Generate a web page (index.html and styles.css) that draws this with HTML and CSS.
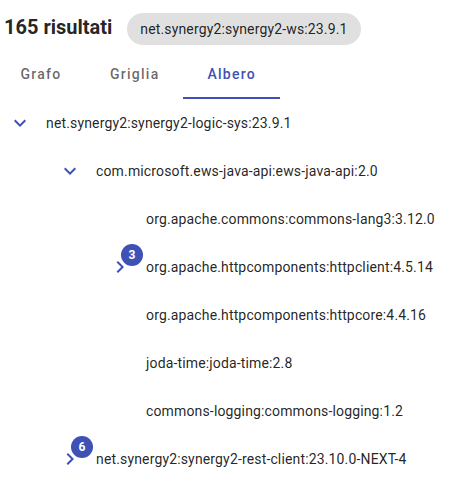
FILE: index.html
```html
<!DOCTYPE html>
<html lang="it">
<head>
<meta charset="utf-8">
<title>Albero</title>
<link rel="stylesheet" href="styles.css">
</head>
<body>
<div class="header">
  <h2 class="title">165 risultati</h2>
  <span class="chip">net.synergy2:synergy2-ws:23.9.1</span>
</div>
<nav class="tabs">
  <div class="tab">Grafo</div>
  <div class="tab">Griglia</div>
  <div class="tab active">Albero</div>
</nav>
<div class="tree">
  <div class="node lvl0">
    <span class="toggle"><svg viewBox="0 0 24 24"><path d="M16.59 8.59L12 13.17 7.41 8.59 6 10l6 6 6-6z"/></svg></span>
    <span class="label">net.synergy2:synergy2-logic-sys:23.9.1</span>
  </div>
  <div class="node lvl1">
    <span class="toggle"><svg viewBox="0 0 24 24"><path d="M16.59 8.59L12 13.17 7.41 8.59 6 10l6 6 6-6z"/></svg></span>
    <span class="label">com.microsoft.ews-java-api:ews-java-api:2.0</span>
  </div>
  <div class="node lvl2">
    <span class="toggle"></span>
    <span class="label">org.apache.commons:commons-lang3:3.12.0</span>
  </div>
  <div class="node lvl2">
    <span class="toggle"><svg viewBox="0 0 24 24"><path d="M10 6L8.59 7.41 13.17 12l-4.58 4.59L10 18l6-6z"/></svg><span class="badge">3</span></span>
    <span class="label">org.apache.httpcomponents:httpclient:4.5.14</span>
  </div>
  <div class="node lvl2">
    <span class="toggle"></span>
    <span class="label">org.apache.httpcomponents:httpcore:4.4.16</span>
  </div>
  <div class="node lvl2">
    <span class="toggle"></span>
    <span class="label">joda-time:joda-time:2.8</span>
  </div>
  <div class="node lvl2">
    <span class="toggle"></span>
    <span class="label">commons-logging:commons-logging:1.2</span>
  </div>
  <div class="node lvl1">
    <span class="toggle"><svg viewBox="0 0 24 24"><path d="M10 6L8.59 7.41 13.17 12l-4.58 4.59L10 18l6-6z"/></svg><span class="badge">6</span></span>
    <span class="label">net.synergy2:synergy2-rest-client:23.10.0-NEXT-4</span>
  </div>
</div>
</body>
</html>
```
FILE: styles.css
```css
html, body {
  margin: 0;
  padding: 0;
  background: #ffffff;
}
body {
  font-family: Roboto, "Noto Sans", "Liberation Sans", sans-serif;
  color: rgba(0, 0, 0, 0.87);
  overflow: hidden;
}
.header {
  display: flex;
  align-items: baseline;
  gap: 15px;
  padding: 11px 0 0 4px;
  height: 40px;
}
.title {
  margin: 0;
  font-size: 20px;
  font-weight: 700;
  line-height: 32px;
  color: rgba(0, 0, 0, 0.87);
}
.chip {
  display: inline-flex;
  align-items: center;
  height: 32px;
  padding: 0 13px;
  border-radius: 16px;
  background: #e0e0e0;
  font-size: 14px;
  letter-spacing: 0.15px;
  color: rgba(0, 0, 0, 0.87);
}
.tabs {
  display: flex;
  margin-left: -4px;
  height: 48px;
}
.tab {
  min-width: 90px;
  box-sizing: border-box;
  padding: 0 24px;
  display: flex;
  align-items: center;
  justify-content: center;
  font-size: 14px;
  font-weight: 500;
  letter-spacing: 1.25px;
  color: rgba(0, 0, 0, 0.6);
  border-bottom: 2px solid transparent;
}
.tab.active {
  color: #3f51b5;
  border-bottom-color: #3f51b5;
}
.tree {
  display: flex;
  flex-direction: column;
}
.node {
  display: flex;
  align-items: center;
  height: 48px;
  gap: 14px;
  font-size: 14px;
  letter-spacing: 0.15px;
}
.lvl0 { padding-left: 8px; }
.lvl1 { padding-left: 58px; }
.lvl2 { padding-left: 108px; }
.toggle {
  position: relative;
  width: 24px;
  height: 24px;
  flex: none;
}
.toggle svg {
  width: 24px;
  height: 24px;
  fill: #3f51b5;
  display: block;
}
.badge {
  position: absolute;
  top: -11px;
  right: -11px;
  width: 22px;
  height: 22px;
  border-radius: 50%;
  background: #3f51b5;
  color: #ffffff;
  font-size: 12px;
  font-weight: 700;
  letter-spacing: 0;
  display: flex;
  align-items: center;
  justify-content: center;
}
.label {
  white-space: nowrap;
}
```
